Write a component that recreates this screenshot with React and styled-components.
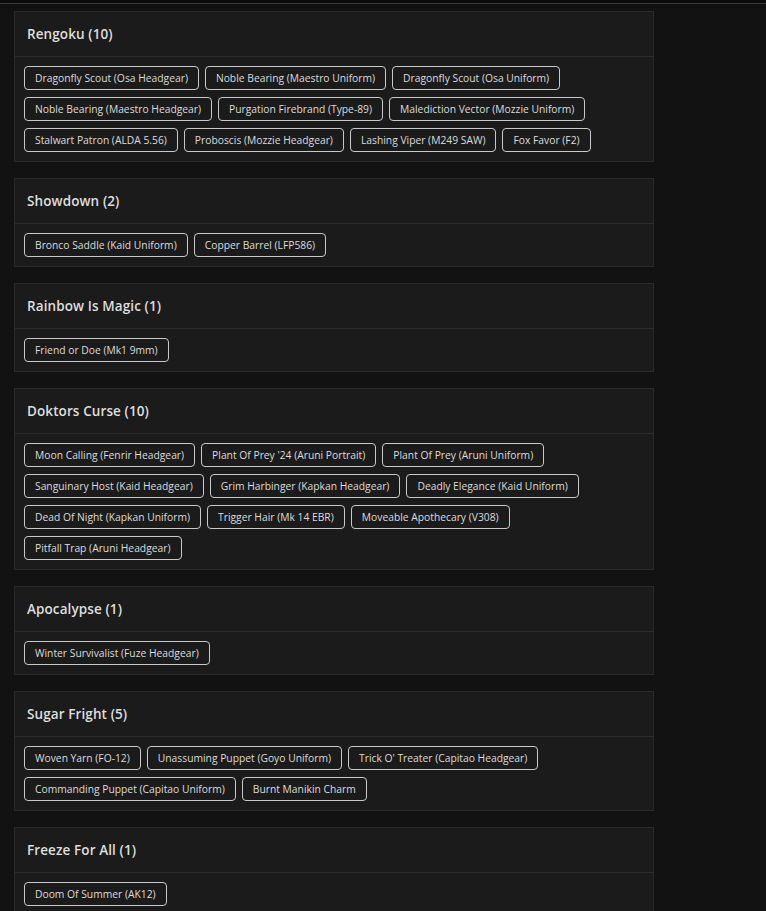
import React from "react";
import styled, { createGlobalStyle } from "styled-components";

const GlobalStyle = createGlobalStyle`
  html, body {
    margin: 0;
    padding: 0;
    background: #121212;
  }
  body {
    font-family: "Open Sans", "Noto Sans", sans-serif;
    color: #e4e4e4;
  }
`;

const TopBar = styled.div`
  height: 3px;
  background: #0b0b0b;
  border-bottom: 1px solid #3a3a3a;
`;

const Page = styled.main`
  width: 640px;
  padding: 7px 0 24px 14px;
  display: flex;
  flex-direction: column;
  gap: 16px;
`;

const Card = styled.section`
  background: #1b1b1b;
  border: 1px solid #2a2a2a;
`;

const CardHeader = styled.header`
  padding: 12px 12px;
  border-bottom: 1px solid #2c2c2c;
`;

const Title = styled.h2`
  margin: 0;
  font-size: 13.5px;
  line-height: 20px;
  font-weight: 600;
  letter-spacing: 0.1px;
  color: #dedede;
`;

const ChipList = styled.div`
  display: flex;
  flex-wrap: wrap;
  row-gap: 7px;
  column-gap: 6px;
  padding: 9px;
`;

const Chip = styled.span`
  display: inline-flex;
  align-items: center;
  height: 24px;
  box-sizing: border-box;
  padding: 0 10px;
  border: 1px solid #c9c9c9;
  border-radius: 4px;
  font-size: 10.3px;
  color: #dcdcdc;
  white-space: nowrap;
`;

const events = [
  {
    name: "Rengoku",
    items: [
      "Dragonfly Scout (Osa Headgear)",
      "Noble Bearing (Maestro Uniform)",
      "Dragonfly Scout (Osa Uniform)",
      "Noble Bearing (Maestro Headgear)",
      "Purgation Firebrand (Type-89)",
      "Malediction Vector (Mozzie Uniform)",
      "Stalwart Patron (ALDA 5.56)",
      "Proboscis (Mozzie Headgear)",
      "Lashing Viper (M249 SAW)",
      "Fox Favor (F2)",
    ],
  },
  {
    name: "Showdown",
    items: ["Bronco Saddle (Kaid Uniform)", "Copper Barrel (LFP586)"],
  },
  {
    name: "Rainbow Is Magic",
    items: ["Friend or Doe (Mk1 9mm)"],
  },
  {
    name: "Doktors Curse",
    items: [
      "Moon Calling (Fenrir Headgear)",
      "Plant Of Prey '24 (Aruni Portrait)",
      "Plant Of Prey (Aruni Uniform)",
      "Sanguinary Host (Kaid Headgear)",
      "Grim Harbinger (Kapkan Headgear)",
      "Deadly Elegance (Kaid Uniform)",
      "Dead Of Night (Kapkan Uniform)",
      "Trigger Hair (Mk 14 EBR)",
      "Moveable Apothecary (V308)",
      "Pitfall Trap (Aruni Headgear)",
    ],
  },
  {
    name: "Apocalypse",
    items: ["Winter Survivalist (Fuze Headgear)"],
  },
  {
    name: "Sugar Fright",
    items: [
      "Woven Yarn (FO-12)",
      "Unassuming Puppet (Goyo Uniform)",
      "Trick O' Treater (Capitao Headgear)",
      "Commanding Puppet (Capitao Uniform)",
      "Burnt Manikin Charm",
    ],
  },
  {
    name: "Freeze For All",
    items: ["Doom Of Summer (AK12)"],
  },
];

export default function App() {
  return (
    <>
      <GlobalStyle />
      <TopBar />
      <Page>
        {events.map((ev) => (
          <Card key={ev.name}>
            <CardHeader>
              <Title>
                {ev.name} ({ev.items.length})
              </Title>
            </CardHeader>
            <ChipList>
              {ev.items.map((item) => (
                <Chip key={item}>{item}</Chip>
              ))}
            </ChipList>
          </Card>
        ))}
      </Page>
    </>
  );
}
